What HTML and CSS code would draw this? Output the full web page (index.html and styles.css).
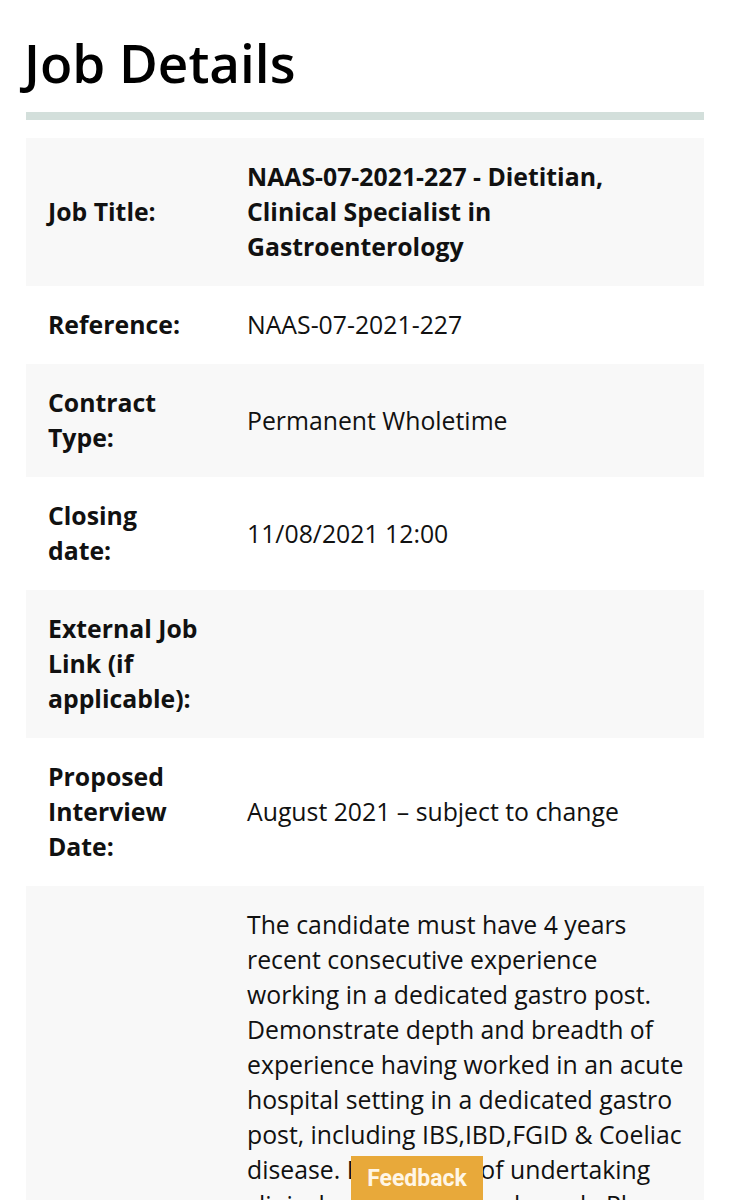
FILE: index.html
```html
<!DOCTYPE html>
<html lang="en">
<head>
<meta charset="utf-8">
<title>Job Details</title>
<link rel="stylesheet" href="styles.css">
</head>
<body>
<main class="page">
  <h1 class="title">Job Details</h1>
  <div class="divider"></div>
  <table class="details">
    <tbody>
      <tr class="odd">
        <th>Job Title:</th>
        <td class="strong">NAAS-07-2021-227 - Dietitian, Clinical Specialist in Gastroenterology</td>
      </tr>
      <tr>
        <th>Reference:</th>
        <td>NAAS-07-2021-227</td>
      </tr>
      <tr class="odd">
        <th>Contract Type:</th>
        <td>Permanent Wholetime</td>
      </tr>
      <tr>
        <th>Closing date:</th>
        <td>11/08/2021 12:00</td>
      </tr>
      <tr class="odd">
        <th>External Job Link (if applicable):</th>
        <td></td>
      </tr>
      <tr>
        <th>Proposed Interview Date:</th>
        <td>August 2021 – subject to change</td>
      </tr>
      <tr class="odd">
        <th></th>
        <td>The candidate must have 4 years recent consecutive experience working in a dedicated gastro post. Demonstrate depth and breadth of experience having worked in an acute hospital setting in a dedicated gastro post, including IBS,IBD,FGID &amp; Coeliac disease. Experience of undertaking clinical audit or research work. Please</td>
      </tr>
    </tbody>
  </table>
</main>
<a class="feedback" href="#">Feedback</a>
</body>
</html>
```
FILE: styles.css
```css
html, body {
  margin: 0;
  padding: 0;
  background: #ffffff;
}
body {
  font-family: "Open Sans", "Noto Sans", sans-serif;
  color: #111111;
}
.page {
  padding: 0 27px 0 26px;
}
.title {
  margin: 0;
  padding-top: 25px;
  font-size: 53px;
  font-weight: 600;
  line-height: 75px;
  color: #000;
  margin-left: -2px;
}
.divider {
  height: 8px;
  background: #d3dfdb;
  margin-top: 12px;
  margin-bottom: 18px;
}
.details {
  width: 100%;
  border-collapse: collapse;
  font-size: 24.8px;
  line-height: 35px;
}
.details tr {
  background: #ffffff;
}
.details tr.odd {
  background: #f8f8f8;
}
.details th,
.details td {
  padding: 21px 12px 22px 22px;
  vertical-align: middle;
  text-align: left;
}
.details th {
  width: 154px;
  padding-right: 23px;
  font-weight: 700;
}
.details td {
  font-weight: 400;
}
.details td.strong {
  font-weight: 700;
}
.feedback {
  position: fixed;
  left: 351px;
  bottom: -10px;
  width: 132px;
  height: 54px;
  background: #e8a93a;
  color: #fff6e6;
  font-family: Roboto, "Liberation Sans", sans-serif;
  font-weight: 700;
  font-size: 23px;
  text-align: center;
  line-height: 46px;
  text-decoration: none;
}
```
